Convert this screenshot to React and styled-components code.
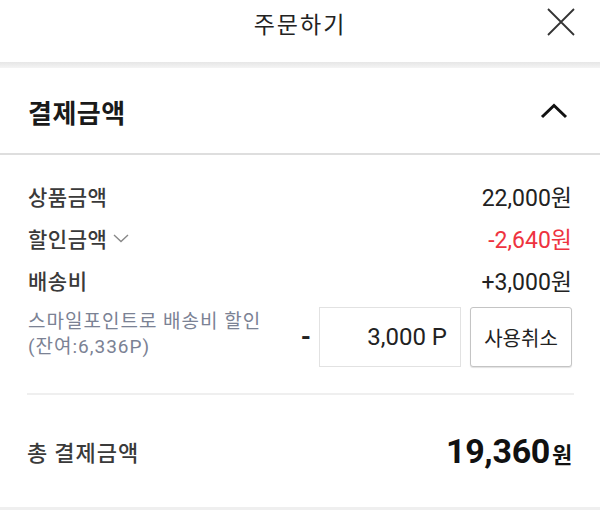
import React from 'react';
import styled, { createGlobalStyle } from 'styled-components';

const GlobalStyle = createGlobalStyle`
    html, body {
        margin: 0;
        padding: 0;
        background: #fff;
        font-family: Roboto, "Noto Sans CJK KR", sans-serif;
        color: #222;
    }
`;

const Page = styled.div`
    width: 600px;
    height: 510px;
    overflow: hidden;
    display: flex;
    flex-direction: column;
    background: #fff;
`;

const Header = styled.header`
    height: 62px;
    display: grid;
    grid-template-columns: 1fr auto 1fr;
    align-items: center;
`;

const HeaderTitle = styled.h1`
    grid-column: 2;
    margin: 0;
    font-family: "Noto Sans CJK KR", sans-serif;
    font-size: 23px;
    font-weight: 400;
    letter-spacing: 2px;
    color: #222;
    transform: translateY(-8px);
`;

const CloseButton = styled.button`
    justify-self: end;
    margin-right: 25px;
    padding: 0;
    border: 0;
    background: none;
    width: 28px;
    height: 28px;
    display: flex;
    transform: translateY(-9px);
`;

const Band = styled.div`
    height: 6px;
    background: linear-gradient(#e6e6e6, #f4f4f4);
`;

const SectionHeader = styled.div`
    height: 85px;
    padding: 0 32px 0 28px;
    display: flex;
    align-items: center;
    justify-content: space-between;
    border-bottom: 2px solid #dedede;
`;

const SectionTitle = styled.h2`
    margin: 0;
    font-family: "Noto Sans CJK KR", sans-serif;
    font-size: 26px;
    font-weight: 700;
    letter-spacing: 0.5px;
    color: #1a1a1a;
    transform: translateY(1px);
`;

const Rows = styled.div`
    padding: 20px 28px 0 28px;
    display: flex;
    flex-direction: column;
`;

const Row = styled.div`
    height: 42px;
    display: flex;
    align-items: center;
    justify-content: space-between;
`;

const Label = styled.span`
    font-family: "Noto Sans CJK KR", sans-serif;
    font-size: 21px;
    font-weight: 500;
    letter-spacing: 0.5px;
    color: #3a3a3a;
    display: flex;
    align-items: center;
    gap: 6px;
`;

const Value = styled.span`
    font-family: Roboto, "Noto Sans CJK KR", sans-serif;
    font-size: 23px;
    color: ${props => props.red ? "#ee3340" : "#222"};
`;

const PointRow = styled.div`
    margin-top: 6px;
    height: 60px;
    display: flex;
    align-items: center;
`;

const PointText = styled.div`
    flex: 1;
    font-family: Roboto, "Noto Sans CJK KR", sans-serif;
    font-size: 19px;
    letter-spacing: 1px;
    line-height: 25px;
    color: #7b8294;
    transform: translateY(-3px);
`;

const Minus = styled.span`
    font-family: Roboto, sans-serif;
    font-size: 26px;
    font-weight: 700;
    color: #222;
    margin-right: 8px;
`;

const PointInput = styled.div`
    box-sizing: border-box;
    width: 142px;
    height: 60px;
    border: 1px solid #e2e2e2;
    display: flex;
    align-items: center;
    justify-content: flex-end;
    padding-right: 13px;
    font-family: Roboto, sans-serif;
    font-size: 24px;
    color: #222;
`;

const CancelButton = styled.button`
    box-sizing: border-box;
    margin-left: 9px;
    width: 102px;
    height: 60px;
    border: 1px solid #c4c4c4;
    border-radius: 3px;
    background: #fff;
    box-shadow: 0 1px 1px rgba(0,0,0,.12);
    font-family: "Noto Sans CJK KR", sans-serif;
    font-size: 20px;
    color: #222;
    padding: 0;
`;

const Divider = styled.div`
    margin: 26px 26px 0 27px;
    height: 2px;
    background: #efefef;
`;

const TotalRow = styled.div`
    height: 112px;
    padding: 0 28px 0 27px;
    display: flex;
    align-items: center;
    justify-content: space-between;
`;

const TotalLabel = styled.span`
    font-family: "Noto Sans CJK KR", sans-serif;
    font-size: 22px;
    font-weight: 500;
    letter-spacing: 1px;
    color: #3a3a3a;
`;

const TotalValue = styled.span`
    font-family: Roboto, sans-serif;
    font-size: 34px;
    font-weight: 700;
    color: #111;
    display: flex;
    align-items: baseline;
    letter-spacing: -0.3px;
`;

const Won = styled.span`
    font-family: "Noto Sans CJK KR", sans-serif;
    font-size: 22px;
    font-weight: 700;
    margin-left: 2px;
`;

const BottomBand = styled.div`
    flex: 1;
    background: #efefef;
`;

const App = () => {
    return (
        <>
            <GlobalStyle />
            <Page>
                <Header>
                    <HeaderTitle>주문하기</HeaderTitle>
                    <CloseButton aria-label="닫기">
                        <svg width="28" height="28" viewBox="0 0 28 28">
                            <path d="M1 1 L27 27 M27 1 L1 27" stroke="#333" strokeWidth="1.8" fill="none" />
                        </svg>
                    </CloseButton>
                </Header>
                <Band />
                <SectionHeader>
                    <SectionTitle>결제금액</SectionTitle>
                    <svg width="28" height="16" viewBox="0 0 28 16">
                        <path d="M2 14 L14 2.5 L26 14" stroke="#111" strokeWidth="3" fill="none" strokeLinejoin="miter" />
                    </svg>
                </SectionHeader>
                <Rows>
                    <Row>
                        <Label>상품금액</Label>
                        <Value>22,000원</Value>
                    </Row>
                    <Row>
                        <Label>
                            할인금액
                            <svg width="16" height="9" viewBox="0 0 16 9">
                                <path d="M1 1 L8 7.5 L15 1" stroke="#888" strokeWidth="1.4" fill="none" />
                            </svg>
                        </Label>
                        <Value red>-2,640원</Value>
                    </Row>
                    <Row>
                        <Label>배송비</Label>
                        <Value>+3,000원</Value>
                    </Row>
                    <PointRow>
                        <PointText>
                            스마일포인트로 배송비 할인<br />(잔여:6,336P)
                        </PointText>
                        <Minus>-</Minus>
                        <PointInput>3,000 P</PointInput>
                        <CancelButton>사용취소</CancelButton>
                    </PointRow>
                </Rows>
                <Divider />
                <TotalRow>
                    <TotalLabel>총 결제금액</TotalLabel>
                    <TotalValue>19,360<Won>원</Won></TotalValue>
                </TotalRow>
                <BottomBand />
            </Page>
        </>
    );
};

export default App;
